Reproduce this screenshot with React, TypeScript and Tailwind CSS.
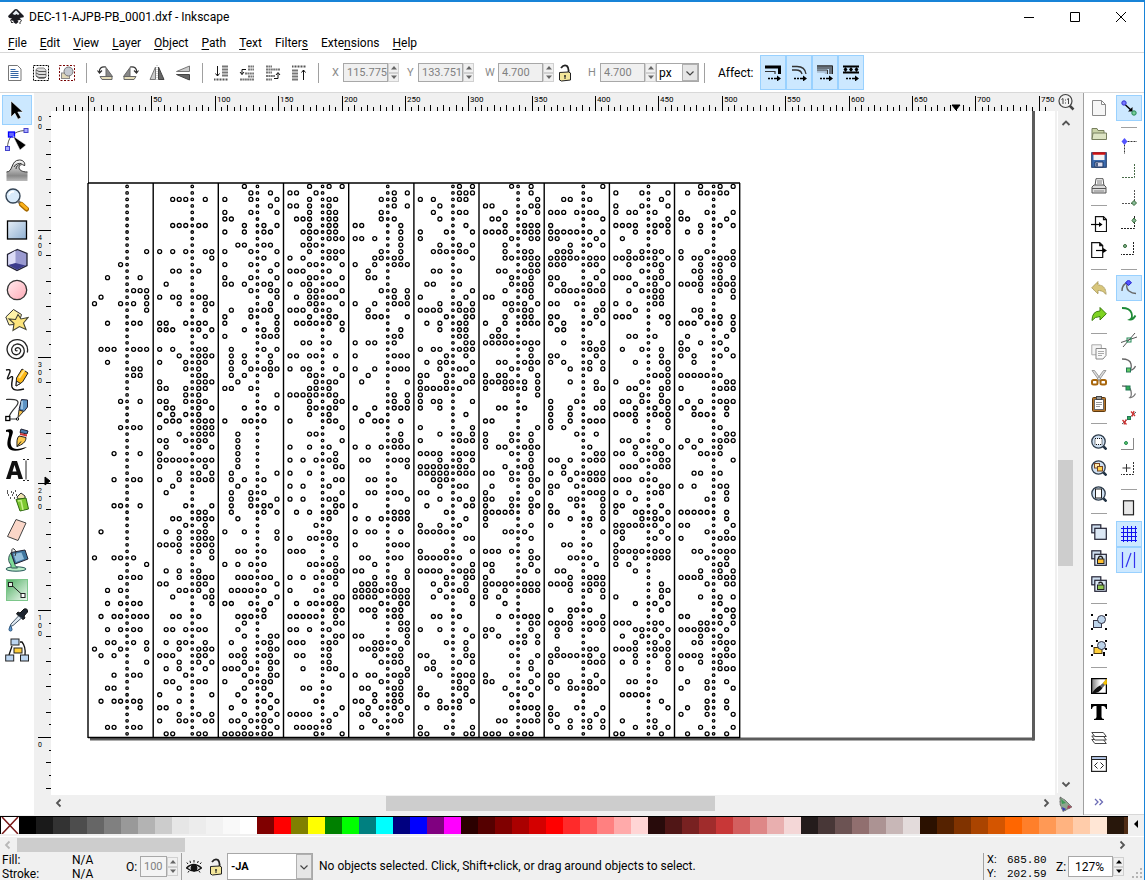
import React from "react";

const TAPES: string[] = [
  "- - - - - - - - - - 7 - 4 - 26 - 567 17 0457 7 - 256 - - - 123567 - 2 56 56 - - - 46 - - - 456 - - - 36 - - - 356 - - - 346 - - - 1 - - - 0345 7 - 456 - 24 - 2456 - 134567 - 2456 - 2357 047 13 7 - 356 - 23 - 13456 6 - - 2356 -",
  "- - 2346 - - - 23456 - - - 02467 7 - 235 - 1 - 02356 367 6 - 01456 01257 6 - 0256 3567 0456 45 56 0567 01456 45 01456 1257 0245 123567 0567 3567 01456 157 0 01234567 06 357 03567 2 1 - 47 56 23567 46 1356 3567 0123567 357 7 - 135 3567 0156 3457 267 7 - 235 - 12456 - 1346 3567 01256 357 136 4 1256 3 07 3 01 357 03467 - 1256",
  "3 46 047 6 047 01 357 0356 - 2356 047 5 047 6 047 01356 467 7 6 1456 047 07 357 0567 - 157 136 136 14567 136 2 014 7 - 357 - 0345 - 2 2 2 2 2 2 17 135 2 145 147 1456 157 2 - 037 7 - 235 - 0245 - 23456 7 12345 7 0146 5 2345 3 2 367 156 367 12356 367 01246 367 0456 35 26 357 16 357 12456 357 0123456",
  "357 014 356 0135 356 12356 356 23456 3567 234 3567 0256 347 0125 347 02356 347 13456 347 01245 356 123457 7 - 235 - 01346 - 0236 347 456 345 0123456 367 3456 35 056 7 34 7 035 6 02456 67 03 67 025 7 0256 67 1356 5 4 5 03456 6 012 6 3456 67 02456 6 04 67 13456 67 012346 67 0135 67 01256 5 125 5 256 7 - 235 - 4 7 01236 5 12345 47",
  "- 57 45 57 4 45 016 6 0136 6 46 3456 03567 2 23 - 457 57 03567 2 2347 - 6 56 0235 - 0567 - 03567 2 17 - 57 57 03567 2 1346 - 6 56 024567 - 12567 7 - 235 - 2356 7 0 567 024567 - 0236 - 0567 - 1256 3 017 357 1235 01234567 0123567 467 12356 356 67 67 017 3457 12346 356 456 7 023567 46 1256 356 01356 2457 126 356 14 -",
  "57 567 0256 3 256 3 6 047 0 357 23456 7 - 235 - 125 7 06 357 0123567 467 1356 356 56 67 023567 46 1347 356 0147 0467 012345 0 0237 03 6 - 07 357 0567 - 0123567 357 0123456 01234567 234 356 01 357 167 4 6 035 01234 67 - 047 012345 7 0123567 467 246 356 247 7 - 235 - 036 7 46 6 0167 257 12 3567 57 056 016 357 1345 - - 047 0167",
  "46 6 7 0167 357 12 3567 0123567 467 3 356 34567 67 23567 46 456 356 016 3457 456 356 03567 2 123 01234567 6 6 23567 46 0237 0123457 03457 7 - 235 - 01 7 046 046 023567 46 6 356 0146 467 16 07 0146 0467 012346 0 06 345 6 - 01246 67 016 157 0 01234567 03567 02 3 - 24567 67 016 0257 457 - 47 6 6 047 016 357 46 - 4567 7 23567 - 012456",
  "7 - 235 - 012456 7 0 0123457 016 357 123 01234567 01256 7 016 0257 1234567 - 0147 67 016 0257 12 - 257 567 016 0257 357 - 36 67 - 047 0367 03 03567 02 46 - 5 67 013567 2 024567 3567 014 0567 347 047 017 357 05 7 - 235 - 345 6 12 3567 0123567 357 7 - 0345 37 0123567 1357 1 - 156 0123457 0567 - 016 0357 13456 - - 047 016 0357 1357 -",
  "- 047 6 047 0235 7 0123567 357 1 - 2456 0123457 256 46 01256 357 2456 56 0256 3 01267 7 - 235 - 146 6 367 7 567 047 2367 46 12467 357 0123567 37 7 - 1246 357 01356 467 123567 - 01245 67 0256 3 016 03457 456 0123457 016 157 0 01234567 03567 02 3 - 6 67 06 357 6 - 01256 3457 146 357 0123567 357 137 7 - 235 - 1234 6 7 - 15 357 016",
  "357 13456 - - 047 016 357 13 - - 047 023567 357 235 357 0123567 357 7 - 23 357 012457 7 16 035 016 0257 2 - 012345 67 0567 - 13567 026 2346 - 5 67 13567 025 345 7 - 235 - 0256 6 46 - 012346 6 017 46 0567 - 23567 46 56 357 0123567 467 - 357 5 67 0157 3457 012346 35 23567 6 0123567 35 0567 - 146 047 - 46 146 047 - 37 146",
];

const PITCH = 6.517;
const STRIP = 65.17;

function ring(cx: number, cy: number, r: number) {
  return `M${(cx - r).toFixed(2)} ${cy.toFixed(2)}a${r} ${r} 0 1 0 ${2 * r} 0a${r} ${r} 0 1 0 ${-2 * r} 0`;
}

function buildHoles() {
  let data = "";
  let feed = "";
  TAPES.forEach((tape, t) => {
    const x0 = 94.5 + t * STRIP;
    tape.split(" ").forEach((row, r) => {
      const y = 186.4 + r * PITCH;
      feed += ring(x0 + 5 * PITCH, y, 1.25);
      if (row === "-") return;
      for (const ch of row) {
        const n = Number(ch);
        data += ring(x0 + (n > 4 ? n + 1 : n) * PITCH, y, 2);
      }
    });
  });
  return { data, feed };
}

const HOLES = buildHoles();

const PALETTE = (
  "000000 1a1a1a 333333 4d4d4d 666666 808080 999999 b3b3b3 cccccc e6e6e6 ececec f2f2f2 f9f9f9 ffffff " +
  "800000 ff0000 808000 ffff00 008000 00ff00 008080 00ffff 000080 0000ff 800080 ff00ff " +
  "2b0000 550000 800000 aa0000 d40000 ff0000 ff2a2a ff5555 ff8080 ffaaaa ffd5d5 " +
  "280b0b 501616 782121 a02c2c c83737 d35f5f de8787 e9afaf f4d7d7 " +
  "241c1c 483737 6c5353 916f6f ac9393 c8b7b7 e3dbdb " +
  "2b1100 552200 803300 aa4400 d45500 ff6600 ff7f2a ff9955 ffb380 ffccaa ffe6d5 28170b 502d16"
).split(" ");

type Item = { name: string; art: React.ReactNode; on?: boolean } | null;

function Art({ size, children }: { size: 16 | 24; children: React.ReactNode }) {
  return (
    <svg
      viewBox={size === 16 ? "0 0 16 16" : "0 0 24 24"}
      className={size === 16 ? "size-4 shrink-0" : "size-6 shrink-0"}
      fill="none"
      stroke="#222"
      aria-hidden="true"
    >
      {children}
    </svg>
  );
}

/* ---------- toolbar art ---------- */

const TOP_ICONS: Item[] = [
  {
    name: "Select all",
    art: (
      <>
        <path d="M1.500.5h9l3.500 3.500v11.500H1.500z" fill="#fff" stroke="#777" />
        <path d="M3.500 4.500h5M3.500 6.500h8M3.500 8.500h8M3.500 10.500h8M3.500 12.500h8" stroke="#3465a4" />
      </>
    ),
  },
  {
    name: "Select all in all layers",
    art: (
      <>
        <rect x=".5" y=".5" width="15" height="15" stroke="#000" strokeDasharray="2 1" />
        <path d="M3 4.500l2-1.500h6l2 2v7l-2 1.500H6L3 11z" fill="#ddd" stroke="#888" />
        <path d="M3 5l3 1.500h7M3 8l3 1.500h7M3 11l3 1.500h7" stroke="#555" />
      </>
    ),
  },
  {
    name: "Deselect",
    art: (
      <>
        <rect x=".5" y=".5" width="15" height="15" stroke="#700" strokeDasharray="2 1.500" />
        <rect x="2.500" y="8" width="8" height="5.500" fill="#e0d8b8" stroke="#888" />
        <circle cx="9.500" cy="6.500" r="4.500" fill="#c4c9d0" stroke="#777" />
      </>
    ),
  },
  null,
  {
    name: "Rotate 90 degrees counter-clockwise",
    art: (
      <>
        <path d="M9 2.500l6.500 9H9z" fill="#888" stroke="#666" />
        <path d="M3 11.500h12v3H5z" fill="#e4dcb8" stroke="#666" />
        <path d="M9 2C4 1 2 4 2.500 7M.5 5.500l2 2.500L5 5.500" stroke="#333" strokeWidth="1.200" />
      </>
    ),
  },
  {
    name: "Rotate 90 degrees clockwise",
    art: (
      <>
        <path d="M7 2.500L.5 11.500H7z" fill="#888" stroke="#666" />
        <path d="M13 11.500H1v3h10z" fill="#e4dcb8" stroke="#666" />
        <path d="M7 2c5-1 7 2 6.500 5M15.500 5.500l-2 2.500L11 5.500" stroke="#333" strokeWidth="1.200" />
      </>
    ),
  },
  {
    name: "Flip horizontal",
    art: (
      <>
        <path d="M6.500 2v12.500H1z" fill="#ccc" stroke="#777" />
        <path d="M9.500 2v12.500H15z" fill="#666" stroke="#444" />
        <path d="M8 0v16" stroke="#aaa" strokeDasharray="1 1" />
      </>
    ),
  },
  {
    name: "Flip vertical",
    art: (
      <>
        <path d="M14.500 6.500H1.500L14.500 1z" fill="#ccc" stroke="#777" />
        <path d="M14.500 9.500H1.500l13 5.500z" fill="#666" stroke="#444" />
      </>
    ),
  },
  null,
  {
    name: "Lower to bottom",
    art: (
      <>
        <path d="M9 1.500h6M9 4.500h6M9 7.500h6M9 10.500h6" stroke="#777" strokeWidth="2" />
        <path d="M1 14.500h14" stroke="#555" strokeWidth="2" strokeDasharray="1 .5" />
        <path d="M4.500 1v10M2.500 8.500l2 2.500 2-2.500" stroke="#111" />
      </>
    ),
  },
  {
    name: "Lower",
    art: (
      <>
        <path d="M9 1.500h6M9 4.500h6M6 8.500h9M9 11.500h6M1 14.500h14" stroke="#777" strokeWidth="2" strokeDasharray="2 .4" />
        <path d="M7 4.500H3v5M1 7l2 2.500L5 7" stroke="#111" />
      </>
    ),
  },
  {
    name: "Raise",
    art: (
      <>
        <path d="M1 1.500h6M1 4.500h14M1 7.500h6M1 11h9M1 14.500h6" stroke="#777" strokeWidth="2" strokeDasharray="2 .4" />
        <path d="M9 13.500h4V8M11 10l2-2.500 2 2.500" stroke="#111" />
      </>
    ),
  },
  {
    name: "Raise to top",
    art: (
      <>
        <path d="M1 1.500h14" stroke="#555" strokeWidth="2" strokeDasharray="1 .5" />
        <path d="M1 5.500h6M1 8.500h6M1 11.500h6M1 14.500h6" stroke="#777" strokeWidth="2" />
        <path d="M12.500 15V5M10.500 7.500l2-2.500 2 2.500" stroke="#111" />
      </>
    ),
  },
  null,
];

const arrow = (
  <>
    <path d="M3 13.500h2M6 13.500h2M9 13.500h4" stroke="#000" strokeWidth="1.500" />
    <path d="M12 10.500l4 3-4 3z" fill="#000" stroke="none" />
  </>
);

const AFFECT_ICONS: Item[] = [
  {
    name: "Scale stroke width",
    on: true,
    art: (
      <>
        <path d="M0 2h14.500v7" stroke="#000" strokeWidth="3" />
        <path d="M0 6.500h10V9" stroke="#333" strokeWidth="1.200" />
        {arrow}
      </>
    ),
  },
  {
    name: "Scale rounded corners",
    on: true,
    art: (
      <>
        <path d="M1 1.500h5q8 0 9 7.500M1 5h4q5 0 6 4" stroke="#333" strokeWidth="1.300" />
        {arrow}
      </>
    ),
  },
  {
    name: "Move gradients",
    on: true,
    art: (
      <>
        <path d="M0 2.500h13.500V9" stroke="#68727c" strokeWidth="3" />
        <path d="M0 .8h15.500V9" stroke="#222" />
        <path d="M0 6.500h9V9" stroke="#a9bfd4" strokeWidth="2.500" />
        <path d="M0 5h10.500v4" stroke="#333" />
        {arrow}
      </>
    ),
  },
  {
    name: "Move patterns",
    on: true,
    art: (
      <>
        <path d="M0 1.500h16M0 7.500h16" stroke="#000" strokeWidth="2" />
        <path d="M2.500 2l2 2.500-2 2.500-2-2.500zM8 2l2 2.500L8 7 6 4.500zM13.500 2l2 2.500-2 2.500-2-2.500z" fill="#000" stroke="none" />
        {arrow}
      </>
    ),
  },
];

/* ---------- toolbox art ---------- */

const TOOLS: Item[] = [
  {
    name: "Select",
    on: true,
    art: <path d="M6 3v16l3.800-3.800 3.200 6 3-1.500-3.200-5.700H18z" fill="#000" stroke="#fff" strokeWidth=".6" />,
  },
  {
    name: "Edit paths by nodes",
    art: (
      <>
        <path d="M2.500 20C2.500 10 8 3 20 2.500" stroke="#555" />
        <rect x=".5" y="18.500" width="4" height="4" fill="#a9a9ff" stroke="#44c" />
        <rect x="19" y=".5" width="4" height="4" fill="#a9a9ff" stroke="#44c" />
        <rect x="3.500" y="4" width="6" height="5" fill="#66f" stroke="#00f" strokeWidth="1.300" />
        <path d="M8 8l13 9-6 5z" fill="#000" stroke="#fff" strokeWidth=".5" />
      </>
    ),
  },
  {
    name: "Tweak",
    art: (
      <>
        <defs>
          <linearGradient id="waveFade" x1="0" y1="0" x2="0" y2="1">
            <stop offset="0" stopColor="#fff" />
            <stop offset=".75" stopColor="#888" />
            <stop offset="1" stopColor="#bbb" />
          </linearGradient>
        </defs>
        <path d="M1.500 23v-9c7 0 4-12 13-12 4 0 6 3 5 6-1-2-5-2-5.500 1-.3 3 3 5 8.500 5v9z" fill="url(#waveFade)" stroke="none" />
        <path d="M1.500 14c7 0 4-12 13-12 4 0 6 3 5 6-1-2-5-2-5.500 1-.3 3 3 5 8.500 5M9 9c1-3 5-4 7.500-3.500M11 11c0-3 2-4 4-4.500" stroke="#333" />
      </>
    ),
  },
  {
    name: "Zoom",
    art: (
      <>
        <circle cx="8" cy="8" r="7" fill="#d8eafa" stroke="#345" strokeWidth="1.400" />
        <path d="M4 7q1-4 5-3" stroke="#fff" strokeWidth="1.500" />
        <path d="M13 13l3 3" stroke="#777" strokeWidth="3" />
        <path d="M16.500 16.500l5 4.500" stroke="#a66a00" strokeWidth="5" strokeLinecap="round" />
        <path d="M16.500 16l5 4.500" stroke="#fbb11a" strokeWidth="3" strokeLinecap="round" />
      </>
    ),
  },
  {
    name: "Rectangle",
    art: (
      <>
        <defs>
          <linearGradient id="blueFade" x1="0" y1="0" x2="1" y2="1">
            <stop offset="0" stopColor="#e6eff8" />
            <stop offset="1" stopColor="#8fb0d2" />
          </linearGradient>
        </defs>
        <rect x="2.500" y="3" width="19" height="18" fill="url(#blueFade)" stroke="#000" strokeWidth="1.300" />
      </>
    ),
  },
  {
    name: "3D box",
    art: (
      <>
        <path d="M12.500 1.500l9.500 4v12l-10 5-9.500-5V6.500z" fill="#9a9ad0" stroke="#223" strokeWidth="1.300" />
        <path d="M3.200 7l7.300-4.500v13L3.200 17z" fill="#dcdcf6" stroke="none" />
        <path d="M3.500 17l7-2 10 2.500-8.500 4.300z" fill="#3c3c8c" stroke="none" />
      </>
    ),
  },
  {
    name: "Ellipse",
    art: (
      <>
        <defs>
          <linearGradient id="pinkFade" x1="0" y1="0" x2="1" y2="1">
            <stop offset="0" stopColor="#ffecef" />
            <stop offset="1" stopColor="#ffaab6" />
          </linearGradient>
        </defs>
        <circle cx="12" cy="12" r="9.700" fill="url(#pinkFade)" stroke="#333" strokeWidth="1.300" />
      </>
    ),
  },
  {
    name: "Star",
    art: (
      <>
        <path d="M8.500 1.500l8 5-3 9.500-9.500 1L.8 9z" fill="#fff3a8" stroke="#333" />
        <path d="M13 6.500l3 4.500 7-1.500-4.500 5.500 2.500 6.500-6.500-3-6.500 4 1-7-5-4.500 6.500.5z" fill="#fde57c" stroke="#443" strokeWidth="1.100" />
      </>
    ),
  },
  {
    name: "Spiral",
    art: (
      <path
        d="M12.500 12.500c-1.500 1-3-.8-1.500-2.200 2.300-1.800 5.300.5 4.500 3.300-1 3.500-5.500 4.200-7.700 1.500-2.500-3.400-.6-8.200 3.700-9 5-.8 8.500 3.800 7.600 8.400-1.200 5.400-7 7.700-12 5C1.500 16 .5 9.500 4.500 4.800 8.500.5 16 .3 20 5c2.500 3 3 6.500 2.300 9.500"
        stroke="#222"
        strokeWidth="1.300"
      />
    ),
  },
  {
    name: "Pencil",
    art: (
      <>
        <path d="M1 2c8-2 2 5 1.500 8S7 7 7.500 9 6 15 7 19c1 3 5 4 12 2" stroke="#111" strokeWidth="1.400" />
        <path d="M11 18l.5-8 5.500-9 6 4-5.500 9z" fill="#fcb716" stroke="#222" />
        <path d="M14 10l5.500-8" stroke="#ffe58a" strokeWidth="2" />
        <path d="M11 18l.5-5 4 2.500z" fill="#eee" stroke="#222" />
      </>
    ),
  },
  {
    name: "Bezier curves",
    art: (
      <>
        <path d="M1 1.500c3 0 12-1 12 3S6 12 4 19M3 21h9" stroke="#333" strokeWidth="1.200" />
        <rect x=".8" y="18.500" width="4" height="4" fill="#fff" stroke="#000" strokeWidth="1.300" />
        <circle cx="12.500" cy="21" r="1.200" fill="#fff" stroke="#000" />
        <path d="M16.500 1.500l6 .5v7l-3.500 4.500-5-2z" fill="#5d93c4" stroke="#223" />
        <path d="M17 3v8" stroke="#b5d3ec" strokeWidth="1.500" />
        <path d="M14 12l4.500 1.500-5.500 6z" fill="#f6c14a" stroke="#333" />
      </>
    ),
  },
  {
    name: "Calligraphy",
    art: (
      <>
        <path d="M1 2c5-2 8 0 6.500 4S4 17 8 20c4 2.500 9 0 14-1-4 3-12 5-16 3C0 19 3 11 4 7c.8-3-1-4-3-3z" fill="#000" stroke="none" />
        <path d="M16 1l7 2-1 3-7-1.500z" fill="#4a7db0" stroke="#223" />
        <path d="M15 5l7 1.500v2L15 7z" fill="#c33" stroke="none" />
        <path d="M14 8l7 1.500c0 5-4 7-9 9 0-5-.5-8 2-10.500z" fill="#fbc94e" stroke="#222" />
        <path d="M12 18.500l4-5" stroke="#222" />
      </>
    ),
  },
  {
    name: "Text",
    art: (
      <>
        <path d="M1 21l6-18h5l6 18h-4.500l-1-4H6.500l-1 4zM7.500 13.500h4L9.500 7z" fill="#111" stroke="none" fillRule="evenodd" />
        <path d="M18 1.500h2M22 1.500h2M21 2.500v19M18 22.500h2M22 22.500h2" stroke="#222" />
      </>
    ),
  },
  {
    name: "Spray",
    art: (
      <>
        <path d="M2 3h1M6 4h1M10 3h1M3 7h1M7 7h1M11 7h1M5 10h1M9 10h1M2 5h1M8 5h1" stroke="#222" strokeWidth="1.500" />
        <path d="M12 9l4-4 4 3v3h-7z" fill="#f0e2b0" stroke="#333" />
        <path d="M11 11.500l10-1.500 2.500 11-8.500 2z" fill="#7dc832" stroke="#2f6a10" />
        <path d="M13 13l3-.5 2 9.500" stroke="#c6f088" strokeWidth="1.500" />
      </>
    ),
  },
  {
    name: "Eraser",
    art: <path d="M11 1.500l10 3.500-8 17.500-10.500-4z" fill="#fad6c8" stroke="#444" />,
  },
  {
    name: "Paint bucket",
    art: (
      <>
        <ellipse cx="11" cy="21" rx="10" ry="2.200" fill="#b9ecc6" stroke="#255" />
        <path d="M6 5c-3 3-3 9-.5 11 1 2 0 3 1 4h6c-2-2-3-3-3-5z" fill="#7fdb98" stroke="#355" />
        <path d="M6 4.500l14-2.500 3 9-13 5z" fill="#3f76a0" stroke="#223" />
        <path d="M8.500 6l8-1.500 2.500 6.500-8 3z" fill="#93bedb" stroke="none" />
        <path d="M7 7Q6-1 9 1t1 7" stroke="#333" />
      </>
    ),
  },
  {
    name: "Gradient",
    art: (
      <>
        <defs>
          <linearGradient id="greenFade" x1="0" y1="0" x2="1" y2="1">
            <stop offset="0" stopColor="#4fae62" />
            <stop offset="1" stopColor="#f2fbf3" />
          </linearGradient>
        </defs>
        <rect x="1.500" y="1.500" width="21" height="21" fill="url(#greenFade)" stroke="#7cc68a" />
        <path d="M6 6.500l12 11" stroke="#222" />
        <rect x="3.500" y="4.500" width="4" height="4" fill="#dff3e2" stroke="#222" />
        <rect x="16" y="15.500" width="4" height="4" fill="#fff" stroke="#222" />
      </>
    ),
  },
  {
    name: "Color picker",
    art: (
      <>
        <path d="M15 5l4-4q4-1 3.500 3L19 8l1 2-2 1.500L11.500 6l1.500-2z" fill="#1d2530" stroke="#111" />
        <path d="M13.500 8L6 16l-1 2.500 3-1 8.500-7.500z" fill="#dfe9f2" stroke="#456" />
        <path d="M5.500 17.500q3 5.500 0 5.500-3 0 0-5.500z" fill="#5c9ad6" stroke="#27527c" />
      </>
    ),
  },
  {
    name: "Connector",
    art: (
      <>
        <path d="M7 8L4 17M15 4h2q4 5 3 13" stroke="#111" strokeWidth="1.300" />
        <rect x="6" y="1" width="8" height="6" fill="#bcd6f2" stroke="#222" />
        <rect x="9" y="10" width="8" height="5" fill="#ffcf3a" stroke="#222" />
        <rect x=".7" y="17" width="8" height="6" fill="#bcd6f2" stroke="#222" />
        <rect x="15.500" y="17" width="8" height="6" fill="#bcd6f2" stroke="#222" />
      </>
    ),
  },
];

/* ---------- command art ---------- */

const glass = (
  <>
    <path d="M12 12l3.500 3.500" stroke="#234" strokeWidth="2.500" />
    <circle cx="7.500" cy="7.500" r="6.700" fill="#cfe0f2" stroke="#2f3d4c" strokeWidth="1.300" />
  </>
);
const doubleBox = (
  <>
    <rect x=".8" y=".8" width="9" height="8" fill="#cfdff0" stroke="#223" strokeWidth="1.200" />
    <rect x="3.800" y="4.300" width="11.500" height="11" fill="#dce8f5" stroke="#223" strokeWidth="1.200" />
  </>
);

const COMMANDS: Item[] = [
  { name: "New", art: <path d="M1.500.5h9l4 4v11h-13zM10.500.5v4h4" fill="#f6f6f6" stroke="#888" /> },
  {
    name: "Open",
    art: (
      <>
        <path d="M1 13.500V2.500h5l1 2h6v3" fill="#c9d3a8" stroke="#777f5e" />
        <path d="M1 13.500l1-6.500h13.500v6.500z" fill="#dde4c4" stroke="#777f5e" />
      </>
    ),
  },
  {
    name: "Save",
    art: (
      <>
        <rect x=".7" y=".7" width="14.600" height="14.600" fill="#3c6cb0" stroke="#1d3764" />
        <path d="M2.500 1h11v7h-11z" fill="#f4f4f4" stroke="none" />
        <path d="M1.500 1.500h13" stroke="#c11" strokeWidth="2.500" />
        <path d="M4 10h8v5H4z" fill="#dde" stroke="#1d3764" />
        <path d="M6 11v3.500" stroke="#1d3764" strokeWidth="1.500" />
      </>
    ),
  },
  {
    name: "Print",
    art: (
      <>
        <path d="M4 8L5 .7h7L13 8" fill="#fff" stroke="#555" />
        <path d="M6 3h5M6 5h5" stroke="#777" />
        <path d="M1 9l2-2h10l2 2v6H1zM1 10.500h14" fill="#ddd" stroke="#555" />
        <path d="M3 13h10" stroke="#888" />
      </>
    ),
  },
  null,
  {
    name: "Import",
    art: (
      <>
        <path d="M4.500.6h8l3 3v12H4.500zM12.500.6v3h3" fill="#fff" stroke="#111" strokeWidth="1.200" />
        <path d="M0 8.500h9" stroke="#000" strokeWidth="1.200" />
        <path d="M8 6l3.500 2.500L8 11z" fill="#000" stroke="none" />
      </>
    ),
  },
  {
    name: "Export",
    art: (
      <>
        <path d="M.7.6h8l3 3v12H.7zM8.700.6v3h3" fill="#fff" stroke="#111" strokeWidth="1.200" />
        <path d="M5 8.500h8" stroke="#000" strokeWidth="1.200" />
        <path d="M12 6l4 2.500-4 2.500z" fill="#000" stroke="none" />
      </>
    ),
  },
  null,
  {
    name: "Undo",
    art: <path d="M7 1.500v3.500q8 0 8 9.500-3-4-8-4V14L.7 7.800z" fill="#d8c67c" stroke="#9a8a4a" strokeDasharray="1 .5" />,
  },
  {
    name: "Redo",
    art: <path d="M9 1.500v3.500q-8 0-8 9.500 3-4 8-4V14l6.300-6.200z" fill="#7ed321" stroke="#3a7d0c" />,
  },
  null,
  {
    name: "Copy",
    art: (
      <>
        <path d="M.8.8h9.500v10H.8z" fill="#f4f4f4" stroke="#aaa" />
        <path d="M5 4.500h10v7l-3 3.500H5z" fill="#fafafa" stroke="#888" />
        <path d="M7 7.500h6M7 9.500h6M7 11.500h4" stroke="#aaa" />
      </>
    ),
  },
  {
    name: "Cut",
    art: (
      <>
        <path d="M1 .5h2.500L10.500 10l-2 1zM15 .5h-2.500L5.500 10l2 1z" fill="#ddd" stroke="#888" strokeWidth=".8" />
        <rect x="1" y="10" width="5.500" height="4.500" rx="1.500" stroke="#a8660c" strokeWidth="2" />
        <rect x="9.500" y="10" width="5.500" height="4.500" rx="1.500" stroke="#a8660c" strokeWidth="2" />
      </>
    ),
  },
  {
    name: "Paste",
    art: (
      <>
        <rect x="1.500" y="1.500" width="13" height="14" rx="1" fill="#b5752a" stroke="#5e3a0e" />
        <rect x="3.500" y="3.500" width="9" height="10" fill="#fff" stroke="#666" />
        <rect x="5.500" y=".5" width="5" height="3" fill="#999" stroke="#444" />
        <path d="M5 6.500h6M5 8.500h6M5 10.500h4" stroke="#999" />
      </>
    ),
  },
  null,
  {
    name: "Zoom to selection",
    art: (
      <>
        {glass}
        <rect x="4" y="4.500" width="7" height="6" fill="#fff" stroke="#111" strokeDasharray="1 1" />
      </>
    ),
  },
  {
    name: "Zoom to drawing",
    art: (
      <>
        {glass}
        <rect x="3.500" y="3.500" width="5" height="4.500" fill="#ffe9a8" stroke="#742" />
        <rect x="6.500" y="6.500" width="5" height="4.500" fill="#ffd34d" stroke="#742" />
      </>
    ),
  },
  {
    name: "Zoom to page",
    art: (
      <>
        {glass}
        <rect x="4.500" y="3" width="6" height="9" fill="#fff" stroke="#222" />
      </>
    ),
  },
  null,
  { name: "Duplicate", art: doubleBox },
  {
    name: "Clone",
    art: (
      <>
        {doubleBox}
        <path d="M7.500 9V7.500q2-2.500 4 0V9" stroke="#222" strokeWidth="1.300" />
        <rect x="6.500" y="9" width="6.500" height="4.500" fill="#ffbf30" stroke="#222" />
      </>
    ),
  },
  {
    name: "Unlink clone",
    art: (
      <>
        {doubleBox}
        <path d="M7.500 7.500q2-2.500 4 0V9" stroke="#222" strokeWidth="1.300" />
        <rect x="6.500" y="9" width="6.500" height="4.500" fill="#8fc84e" stroke="#222" />
      </>
    ),
  },
  null,
  {
    name: "Group",
    art: (
      <>
        <rect x="2.500" y="6.500" width="8" height="7" fill="#bcd3ea" stroke="#334" />
        <circle cx="10.500" cy="5.500" r="4" fill="#bcd3ea" stroke="#334" />
        <path d="M0 1h2M14 1h2M0 15h2M14 15h2" stroke="#000" strokeWidth="2" />
      </>
    ),
  },
  {
    name: "Ungroup",
    art: (
      <>
        <rect x="3" y="7.500" width="8" height="6" fill="#ffcf3a" stroke="#431" />
        <circle cx="10.500" cy="5.500" r="4" fill="#bcd3ea" stroke="#334" />
        <path d="M0 6h2M12 13h2M0 15h2M12 15h2M5 1h2M14 1h2M14 9h2" stroke="#000" strokeWidth="1.800" />
      </>
    ),
  },
  null,
  {
    name: "Fill and stroke",
    art: (
      <>
        <defs>
          <linearGradient id="inkFade" x1="0" y1="0" x2="1" y2="0">
            <stop offset="0" stopColor="#777" />
            <stop offset=".6" stopColor="#fff" />
          </linearGradient>
        </defs>
        <path d="M.5.5h15v15H.5z" fill="url(#inkFade)" stroke="#000" strokeWidth="1.500" />
        <path d="M1 15.500Q3 11 9 7.500l2.500 2.500q-3 5-10.500 5.500z" fill="#111" stroke="none" />
        <path d="M9 7.500l3-2.500 2 2-2.500 3z" fill="#666" stroke="none" />
        <path d="M12 5l3.500-4H16v5l-2 1z" fill="#f6c300" stroke="#b80" strokeWidth=".5" />
      </>
    ),
  },
  {
    name: "Text and font",
    art: (
      <path
        d="M0 0h16v5h-1q-.5-3-3-3h-1.500v11q0 2 2.500 2v1H3v-1q2.500 0 2.500-2V2H4Q1.500 2 1 5H0z"
        fill="#000"
        stroke="none"
      />
    ),
  },
  {
    name: "Layers",
    art: (
      <>
        <path d="M.8 9.500l3 4h11.500l-3-4z" fill="#fff" stroke="#444" />
        <path d="M.8 6l3 4h11.500l-3-4z" fill="#fff" stroke="#444" />
        <path d="M.8 2.500l3 4h11.500l-3-4z" fill="#fff" stroke="#444" />
      </>
    ),
  },
  {
    name: "XML editor",
    art: (
      <>
        <rect x=".6" y=".6" width="14.800" height="14.800" fill="#fff" stroke="#222" strokeWidth="1.200" />
        <path d="M1.500 2h13" stroke="#9cb4e0" strokeWidth="1.500" />
        <path d="M1 3.500h14" stroke="#222" />
        <path d="M6.500 6.500l-3 3 3 3M9.500 6.500l3 3-3 3" stroke="#222" />
      </>
    ),
  },
];

/* ---------- snap art ---------- */

const SNAPS: Item[] = [
  {
    name: "Enable snapping",
    on: true,
    art: (
      <>
        <circle cx="3" cy="3" r="2.200" fill="#77f" stroke="#33c" />
        <path d="M4.500 5l6 5.500" stroke="#000" strokeWidth="1.500" />
        <path d="M11.500 7v4.500H7z" fill="#000" stroke="none" />
        <circle cx="13" cy="13" r="2.200" fill="#7c9" stroke="#285" />
      </>
    ),
  },
  null,
  {
    name: "Snap bounding boxes",
    art: (
      <>
        <path d="M3.500 3.500H16M3.500 3.500V16" stroke="#333" strokeDasharray="2 1" />
        <path d="M3.500 0l3 3.500-3 3.500L.5 3.500z" fill="#55f" stroke="none" />
      </>
    ),
  },
  { name: "Snap to bounding box edges", art: <path d="M13.500 0v13.500H0" stroke="#486b48" strokeDasharray="2 1" /> },
  {
    name: "Snap to bounding box corners",
    art: (
      <>
        <path d="M13.500 0v13.500H0" stroke="#555" strokeDasharray="2 1" />
        <path d="M13 10.500l2.500 2.500-2.500 2.500-2.500-2.500z" fill="#8b9" stroke="#363" />
      </>
    ),
  },
  {
    name: "Snap to edge midpoints",
    art: (
      <>
        <path d="M13.500 0v12.500H0" stroke="#222" strokeDasharray="2 1" />
        <path d="M13 2l2 2.500-2 2.500-2-2.500z" fill="#8b9" stroke="#363" />
      </>
    ),
  },
  {
    name: "Snap to bounding box centers",
    art: (
      <>
        <path d="M12.500 0v12.500H0" stroke="#222" strokeDasharray="2 1" />
        <circle cx="4" cy="4" r="1.500" fill="#8b9" stroke="#363" />
      </>
    ),
  },
  null,
  {
    name: "Snap nodes",
    on: true,
    art: (
      <>
        <path d="M1 11Q1 4 7 2.500q-3 5 1 8.500 3 2.500 7 2.500" stroke="#666" strokeWidth="1.400" />
        <path d="M7.500 0l3 2.700-3 2.800-3-2.800z" fill="#55f" stroke="#22c" />
      </>
    ),
  },
  { name: "Snap to paths", art: <path d="M1 2q8 0 9.500 5T9 13.500q3 .5 5.500-4" stroke="#1e8a36" strokeWidth="1.800" /> },
  {
    name: "Snap to path intersections",
    art: (
      <>
        <path d="M0 10.500L16 5M2 15L14 1" stroke="#555" />
        <rect x="6" y="6" width="4" height="4" stroke="#285" />
      </>
    ),
  },
  {
    name: "Snap to cusp nodes",
    art: (
      <>
        <path d="M1 1q8 0 9 5t-1.500 6q4 .5 6-4" stroke="#666" strokeWidth="1.300" />
        <rect x="5.500" y="10" width="4" height="4" fill="#6c6" stroke="#275" />
      </>
    ),
  },
  {
    name: "Snap to smooth nodes",
    art: (
      <>
        <path d="M1 2q8 0 9 5t-1 6.500q3 .5 5.500-4" stroke="#777" strokeWidth="1.300" />
        <rect x="5" y="2" width="4" height="4" fill="#3a5" stroke="#275" />
      </>
    ),
  },
  {
    name: "Snap to line midpoints",
    art: (
      <>
        <path d="M1 14L15 2" stroke="#555" />
        <path d="M1.500 10l4 4.500M3 14.500l2-5M10 1.500L14 6M11 6.500l2-5.500" stroke="#c33" strokeWidth="1.300" />
        <rect x="6.500" y="6.500" width="3" height="3" fill="#3a5" stroke="#275" />
      </>
    ),
  },
  {
    name: "Snap other points",
    art: (
      <>
        <path d="M12.500 2v11.500H0" stroke="#888" />
        <circle cx="5" cy="7" r="1.500" fill="#6c6" stroke="#285" />
      </>
    ),
  },
  {
    name: "Snap to object centers",
    art: (
      <>
        <path d="M12.500 0v12.500H0" stroke="#333" strokeDasharray="2 1" />
        <path d="M5.500 2v8M1.500 6h8" stroke="#333" />
      </>
    ),
  },
  null,
  { name: "Snap to page border", art: <rect x="2.500" y=".8" width="10" height="14" fill="#e8e8e8" stroke="#222" strokeWidth="1.200" /> },
  { name: "Snap to grids", on: true, art: <path d="M0 2.500h16M0 6.500h16M0 10.500h16M0 14.500h16M2.500 0v16M6.500 0v16M10.500 0v16M14.500 0v16" stroke="#11e" /> },
  { name: "Snap to guides", on: true, art: <path d="M1.500 0v16M13.500 0v16M10 1L5 15" stroke="#33e" strokeWidth="1.200" /> },
];

function VerticalBar({ items, label }: { items: Item[]; label: string }) {
  return (
    <div role="toolbar" aria-label={label} className="flex w-[30px] flex-col items-center pt-0.5">
      {items.map((it, i) =>
        it ? (
          <button
            key={i}
            title={it.name}
            aria-label={it.name}
            className={
              it.on
                ? "flex size-[26px] items-center justify-center border border-[#99d1ff] bg-[#cce8ff]"
                : "flex size-[26px] items-center justify-center"
            }
          >
            <Art size={16}>{it.art}</Art>
          </button>
        ) : (
          <div key={i} className="flex h-3 w-4 items-center">
            <div className="h-px w-full bg-[#a0a0a0]" />
          </div>
        ),
      )}
    </div>
  );
}

function Chevron({ dir, faint }: { dir: "up" | "down" | "left" | "right"; faint?: boolean }) {
  const d = {
    up: "M1.500 6L5 2.500 8.500 6",
    down: "M1.500 3.500L5 7l3.500-3.500",
    left: "M6.500 1.500L3 5l3.500 3.500",
    right: "M3.500 1.500L7 5 3.500 8.500",
  }[dir];
  return (
    <svg viewBox="0 0 10 10" className="size-2.5" fill="none" stroke={faint ? "#b8b8b8" : "#555"} strokeWidth="1.800" aria-hidden="true">
      <path d={d} />
    </svg>
  );
}

function ComboArrow() {
  return (
    <span className="pointer-events-none absolute inset-y-0 right-0 flex w-4 items-center justify-center border border-[#b0b0b0] bg-[#e6e6e6]">
      <svg viewBox="0 0 10 10" className="size-2.5" fill="none" stroke="#444" strokeWidth="1.200" aria-hidden="true">
        <path d="M1.500 3.500L5 7l3.500-3.500" />
      </svg>
    </span>
  );
}

function Spinner({ dark }: { dark?: boolean }) {
  const fill = dark ? "#000" : "#666";
  return (
    <div className="flex w-[11px] flex-col">
      <button aria-label="Increase" className="flex flex-1 items-center justify-center border border-[#d0d0d0] bg-[#f0f0f0]">
        <svg viewBox="0 0 6 4" className="h-1 w-1.5">
          <path d="M0 3.500L3 0l3 3.500z" fill={fill} />
        </svg>
      </button>
      <button aria-label="Decrease" className="flex flex-1 items-center justify-center border border-[#d0d0d0] bg-[#f0f0f0]">
        <svg viewBox="0 0 6 4" className="h-1 w-1.5">
          <path d="M0 .5h6L3 4z" fill={fill} />
        </svg>
      </button>
    </div>
  );
}

function NumberField({ label, value, wide }: { label: string; value: string; wide?: boolean }) {
  return (
    <div className="flex items-center">
      <label htmlFor={`dim-${label}`} className={wide ? "w-4 text-center text-[11px] text-[#8a8a8a]" : "w-[11px] text-[11px] text-[#8a8a8a]"}>
        {label}
      </label>
      <input
        id={`dim-${label}`}
        defaultValue={value}
        className="h-[19px] w-[45px] border border-[#a8a8a8] bg-[#f0f0f0] pl-[3px] text-[11px] text-[#808080] outline-none"
      />
      <div className="flex h-[19px]">
        <Spinner />
      </div>
    </div>
  );
}

function OpenLock() {
  return (
    <svg viewBox="0 0 14 18" className="h-[18px] w-3.5 shrink-0" fill="none" aria-hidden="true">
      <path d="M3 4q3-4 6-2 2 2 1.500 6" stroke="#222" strokeWidth="1.800" />
      <path d="M1.500 8.500l9-.5 2 1v7l-9 1-2-1z" fill="#f3e69a" stroke="#222" />
      <path d="M7 11v4M6 12h2" stroke="#222" />
    </svg>
  );
}

const MENUS: [string, string, string][] = [
  ["", "F", "ile"],
  ["", "E", "dit"],
  ["", "V", "iew"],
  ["", "L", "ayer"],
  ["", "O", "bject"],
  ["", "P", "ath"],
  ["", "T", "ext"],
  ["Filter", "s", ""],
  ["Exte", "n", "sions"],
  ["", "H", "elp"],
];

function TitleBar() {
  return (
    <header className="flex h-[33px] shrink-0 items-stretch border-t-2 border-[#1883d7] bg-white">
      <div className="flex flex-1 items-center gap-[5px] pb-0.5 pl-2">
        <svg viewBox="0 0 16 16" className="size-4" aria-hidden="true">
          <path d="M8 0Q9.500 0 11 2l4.500 4.500q1 1.500-1 2l-3 .5 2 1.500-4 1 1 1.500L8 15l-3-2 1-1-4-1 2-1.500L1.500 9Q-.5 8 .5 6.500L5 2q1.500-2 3-2z" fill="#1b1b22" />
          <path d="M8 1.200L11.500 5l-1.500 1-1.500-1L7 6 4.500 5z" fill="#e8eef5" />
          <path d="M2 11.500l2 1M12 12.500l2-1M3 13.500h2M11 14h2" stroke="#333" />
        </svg>
        <h1>DEC-11-AJPB-PB_0001.dxf - Inkscape</h1>
      </div>
      <div className="flex pb-0.5">
        <button aria-label="Minimize" className="flex w-[46px] items-center justify-center">
          <svg viewBox="0 0 10 10" className="size-2.5" stroke="#000"><path d="M0 5.500h10" /></svg>
        </button>
        <button aria-label="Maximize" className="flex w-[46px] items-center justify-center">
          <svg viewBox="0 0 10 10" className="size-2.5" stroke="#000" fill="none"><path d="M.5.5h9v9h-9z" /></svg>
        </button>
        <button aria-label="Close" className="flex w-[46px] items-center justify-center">
          <svg viewBox="0 0 10 10" className="size-2.5" stroke="#000"><path d="M0 0l10 10M10 0L0 10" /></svg>
        </button>
      </div>
    </header>
  );
}

function ControlBar() {
  return (
    <div role="toolbar" aria-label="Selector controls" className="flex h-10 shrink-0 items-center border-b border-[#d8d8d8] bg-white pl-0.5">
      {TOP_ICONS.map((it, i) =>
        it ? (
          <button key={i} title={it.name} aria-label={it.name} className="flex size-[26px] shrink-0 items-center justify-center">
            <Art size={16}>{it.art}</Art>
          </button>
        ) : (
          <div key={i} className="flex h-5 w-3 shrink-0 justify-center">
            <div className="w-px bg-[#a0a0a0]" />
          </div>
        ),
      )}
      <div className="flex items-center gap-2 pl-2">
        <NumberField label="X" value="115.775" />
        <NumberField label="Y" value="133.751" />
        <NumberField label="W" value="4.700" wide />
        <button aria-label="Lock width and height" className="-ml-1 mr-1">
          <OpenLock />
        </button>
        <NumberField label="H" value="4.700" wide />
      </div>
      <div className="relative flex h-[19px] w-[43px] border border-[#a8a8a8] bg-white">
        <select aria-label="Unit" className="w-full appearance-none bg-transparent pl-0.5 outline-none">
          <option>px</option>
        </select>
        <ComboArrow />
      </div>
      <div className="ml-[5px] h-5 w-px bg-[#a0a0a0]" />
      <span className="w-[55px] pl-[13px]">Affect:</span>
      {AFFECT_ICONS.map(
        (it) =>
          it && (
            <button
              key={it.name}
              title={it.name}
              aria-label={it.name}
              aria-pressed="true"
              className="flex h-[35px] w-[26px] items-center justify-center border border-[#99d1ff] bg-[#cce8ff]"
            >
              <Art size={16}>{it.art}</Art>
            </button>
          ),
      )}
    </div>
  );
}

function HorizontalRuler() {
  const step = 6.338;
  const ticks = [];
  for (let i = -5; i <= 151; i++) {
    const x = Math.round(88 + i * step) - 51 + 0.5;
    const h = i % 10 === 0 ? 15 : i % 2 === 0 ? 6 : 4;
    ticks.push(<path key={i} d={`M${x} ${18 - h}V18`} />);
  }
  return (
    <svg className="h-full w-full" stroke="#000" aria-label="Horizontal ruler">
      {ticks}
      {Array.from({ length: 16 }, (_, i) => (
        <text key={i} x={Math.round(88 + i * 63.38) - 51 + 2} y="9" fontSize="8" fill="#000" stroke="none">
          {i * 50}
        </text>
      ))}
      <path d="M901 12h8l-4 5z" fill="#000" />
    </svg>
  );
}

function VerticalRuler() {
  const ticks = [];
  for (let i = -4; i <= 50; i++) {
    const y = Math.round(737 - i * 12.676) - 111 + 0.5;
    const w = i % 10 === 0 ? 13 : i % 2 === 0 ? 5 : 2;
    ticks.push(<path key={i} d={`M${17 - w} ${y}H17`} />);
  }
  const digits: { c: string; y: number }[] = [];
  for (let v = 0; v <= 500; v += 100) {
    String(v)
      .split("")
      .forEach((c, k) => {
        const y = Math.round(737 - v * 1.2676) - 111 + 10 + k * 8;
        if (y > 6) digits.push({ c, y });
      });
  }
  return (
    <svg className="h-full w-full" stroke="#000" aria-label="Vertical ruler">
      {ticks}
      {digits.map(({ c, y }) => (
        <text key={y} x="4" y={y} fontSize="7" fill="#000" stroke="none">
          {c}
        </text>
      ))}
      <path d="M11 366v8l5-4z" fill="#000" />
    </svg>
  );
}

function Canvas() {
  return (
    <svg className="h-full w-full bg-white" aria-label="Drawing">
      <g transform="translate(-51 -111)" fill="none" stroke="#000">
        <path d="M90 739H1034" stroke="#5c5c5c" strokeWidth="3" />
        <path d="M1033.500 105V740.500" stroke="#5c5c5c" strokeWidth="3" />
        <path d="M88.500 105V184" stroke="#444" />
        <path d="M88 183H740M88 737.500H740" strokeWidth="1.500" />
        {Array.from({ length: 11 }, (_, i) => (
          <path key={i} d={`M${(88 + i * 65.17).toFixed(1)} 183V738`} strokeWidth="1.400" />
        ))}
        <path d={HOLES.data} strokeWidth="1.300" />
        <path d={HOLES.feed} strokeWidth="1.300" />
      </g>
    </svg>
  );
}

function StatusBar() {
  return (
    <footer className="flex h-[27px] shrink-0 items-start bg-[#f0f0f0]">
      <dl className="grid w-[126px] grid-cols-[70px_1fr] pl-0.5 leading-[14px]">
        <dt>Fill:</dt>
        <dd>N/A</dd>
        <dt>Stroke:</dt>
        <dd>N/A</dd>
      </dl>
      <div className="flex h-[27px] items-center">
        <label htmlFor="opacity" className="w-3.5">O:</label>
        <input id="opacity" defaultValue="100" className="h-[21px] w-[27px] border border-[#a8a8a8] bg-[#f4f4f4] pl-[3px] text-[11px] text-[#808080] outline-none" />
        <div className="flex h-[19px]">
          <Spinner />
        </div>
      </div>
      <div className="ml-[3px] h-full w-px bg-[#a0a0a0]" />
      <div className="flex h-[27px] items-center gap-[7px] px-1">
        <button aria-label="Toggle layer visibility">
          <svg viewBox="0 0 16 14" className="h-3.5 w-4" fill="none" stroke="#111">
            <path d="M.5 8q7-7 15 0-7 6-15 0z" fill="#ddd" strokeWidth="1.300" />
            <circle cx="8" cy="8" r="3" fill="#111" />
            <path d="M2 4L.8 2.500M4.500 3L4 .8M8 2.500V0M11.500 3l.8-2M14 4l1.300-1.500M3 11l-1 1.500M13 11l1 1.500" />
          </svg>
        </button>
        <button aria-label="Toggle layer lock">
          <OpenLock />
        </button>
      </div>
      <div className="relative flex h-[27px] w-[86px] items-center border border-[#a8a8a8] bg-white">
        <select aria-label="Current layer" className="w-full appearance-none bg-transparent pl-[3px] text-[11px] font-bold outline-none">
          <option>-JA</option>
        </select>
        <ComboArrow />
      </div>
      <p className="flex-1 pl-1.5 leading-[27px]">No objects selected. Click, Shift+click, or drag around objects to select.</p>
      <dl className="grid h-full w-[73px] grid-cols-[20px_1fr] border-l border-[#a0a0a0] pl-[3px] text-[11px] leading-[14px]">
        <dt>X:</dt>
        <dd className="font-[Liberation_Mono,monospace]">685.80</dd>
        <dt>Y:</dt>
        <dd className="font-[Liberation_Mono,monospace]">202.59</dd>
      </dl>
      <div className="flex h-[27px] items-center">
        <label htmlFor="zoom" className="w-3">Z:</label>
        <input id="zoom" defaultValue="127%" className="h-[21px] w-[45px] border border-[#a8a8a8] bg-white pl-1.5 outline-none" />
        <div className="flex h-[19px]">
          <Spinner dark />
        </div>
      </div>
      <svg viewBox="0 0 20 27" className="h-[27px] w-5" aria-hidden="true">
        <path d="M16 16h2M12 20h2M16 20h2M8 24h2M12 24h2M16 24h2" stroke="#b4b4b4" strokeWidth="2" />
      </svg>
    </footer>
  );
}

export default function App() {
  return (
    <div className="flex h-screen min-h-[700px] w-full flex-col overflow-hidden border-r border-[#1883d7] bg-[#f0f0f0] font-[Roboto,Open_Sans,sans-serif] text-[12px] leading-4 text-black">
      <TitleBar />
      <nav className="flex h-5 shrink-0 items-center gap-[13px] border-b border-[#d8d8d8] bg-white pl-2">
        {MENUS.map(([a, b, c]) => (
          <button key={a + b + c}>
            {a}
            <span className="underline underline-offset-2">{b}</span>
            {c}
          </button>
        ))}
      </nav>
      <ControlBar />

      <main className="flex min-h-0 flex-1">
        <div role="toolbar" aria-label="Toolbox" className="flex w-[34px] shrink-0 flex-col items-center bg-white pt-0.5">
          {TOOLS.map(
            (it) =>
              it && (
                <button
                  key={it.name}
                  title={it.name}
                  aria-label={it.name}
                  className={
                    it.on
                      ? "flex size-[30px] items-center justify-center border border-[#99d1ff] bg-[#cce8ff]"
                      : "flex size-[30px] items-center justify-center"
                  }
                >
                  <Art size={24}>{it.art}</Art>
                </button>
              ),
          )}
        </div>

        <div className="grid min-w-0 flex-1 grid-cols-[17px_1fr_28px] grid-rows-[18px_1fr_22px] border-r border-[#a0a0a0]">
          <div />
          <HorizontalRuler />
          <button aria-label="Zoom 1:1" className="flex items-center pl-0.5">
            <svg viewBox="0 0 18 18" className="size-[18px]" fill="none" stroke="#444">
              <path d="M12 12l4.500 4.500" strokeWidth="2.500" />
              <circle cx="8.500" cy="8" r="6.500" fill="#f2f2f2" strokeWidth="1.200" />
              <path d="M4.500 6.500l1.500-1V11M8.500 6.500v1M8.500 9.500v1M10 6.500l1.500-1V11" />
            </svg>
          </button>

          <div className="min-h-0 overflow-hidden">
            <VerticalRuler />
          </div>
          <div className="min-h-0 overflow-hidden">
            <Canvas />
          </div>
          <div className="flex pl-0.5">
            <div className="flex w-4 flex-col items-center border-l border-white pb-1 pt-2">
              <Chevron dir="up" />
              <div className="flex w-full flex-1 flex-col">
                <div className="flex-[331]" />
                <div className="flex-[106] bg-[#cdcdcd]" />
                <div className="flex-[213]" />
              </div>
              <Chevron dir="down" />
            </div>
          </div>

          <div />
          <div className="flex items-start border-t-2 border-white">
            <div className="flex h-4 flex-1 items-center gap-2 pl-[3px] pr-1">
              <Chevron dir="left" />
              <div className="flex h-[15px] flex-1">
                <div className="flex-[314]" />
                <div className="flex-[329] bg-[#cdcdcd]" />
                <div className="flex-[318]" />
              </div>
              <Chevron dir="right" />
            </div>
          </div>
          <button aria-label="Color management" className="flex items-center pl-1">
            <svg viewBox="0 0 14 16" className="h-4 w-3.5">
              <path d="M1 1l5 3 7 7-9 4.500L1 8z" fill="#8fa58f" stroke="#555" strokeDasharray="1 .5" />
              <path d="M2 3l5 4-4 1z" fill="#3d9a56" />
              <path d="M9 9l4 2-5 2z" fill="#a8405a" />
              <path d="M3 11l4 2-3 2z" fill="#3838b8" />
            </svg>
          </button>
        </div>

        <div className="flex shrink-0 border-b border-[#d8d8d8] bg-white">
          <div className="flex flex-col justify-between">
            <VerticalBar items={COMMANDS} label="Commands" />
            <button aria-label="More commands" className="mx-auto pb-2">
              <svg viewBox="0 0 10 8" className="h-2 w-2.5" fill="none" stroke="#6b6bb5" strokeWidth="1.300">
                <path d="M1 1l3 3-3 3M5.500 1l3 3-3 3" />
              </svg>
            </button>
          </div>
          <VerticalBar items={SNAPS} label="Snap controls" />
        </div>
      </main>

      <div className="flex h-[21px] shrink-0 items-start">
        <div className="mt-px flex h-[18px] min-w-0 flex-1 overflow-hidden border-l border-t border-black">
          <button aria-label="No color" className="w-[18px] shrink-0 bg-white">
            <svg viewBox="0 0 18 17" className="h-[17px] w-[18px]" stroke="#781818" strokeWidth="1.500">
              <path d="M1 0l16 17M17 0L1 17" />
            </svg>
          </button>
          {PALETTE.map((c, i) => (
            <button key={i} aria-label={`#${c}`} className="w-[17px] shrink-0" style={{ backgroundColor: `#${c}` }} />
          ))}
        </div>
        <button aria-label="Palette menu" className="flex h-[18px] w-4 items-center justify-center">
          <svg viewBox="0 0 4 8" className="h-2 w-1">
            <path d="M4 0v8L0 4z" fill="#000" />
          </svg>
        </button>
      </div>

      <div className="flex h-[17px] shrink-0 items-center border-t border-white pl-[3px] pr-[17px]">
        <Chevron dir="left" faint />
        <div className="ml-1 flex h-[14px] flex-1">
          <div className="w-[168px] bg-[#cdcdcd]" />
        </div>
        <Chevron dir="right" />
      </div>

      <StatusBar />
    </div>
  );
}
